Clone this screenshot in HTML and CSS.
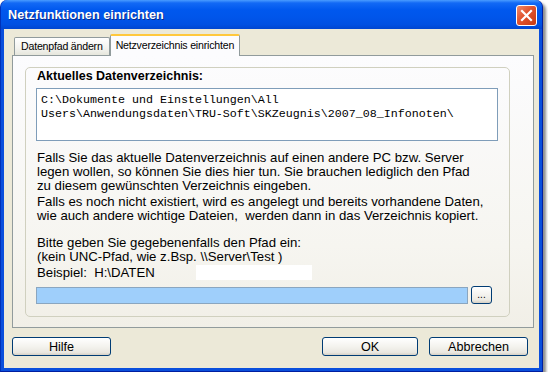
FILE: index.html
```html
<!DOCTYPE html>
<html lang="de">
<head>
  <meta charset="UTF-8" />
  <title>Netzfunktionen einrichten</title>
  <link rel="stylesheet" href="styles.css">
</head>
<body>
  <div class="window">
    <div class="titlebar">
      <span class="title">Netzfunktionen einrichten</span>
      <button class="close" aria-label="Schließen">
        <svg width="13" height="13" viewBox="0 0 13 13">
          <path d="M2 2 L11 11 M11 2 L2 11" stroke="#fff" stroke-width="2.2" stroke-linecap="square"/>
        </svg>
      </button>
    </div>

    <div class="client">
      <div class="tabs">
        <div class="tab">Datenpfad ändern</div>
        <div class="tab active">Netzverzeichnis einrichten</div>
      </div>

      <div class="panel">
        <div class="group">
          <div class="group-title">Aktuelles Datenverzeichnis:</div>
          <div class="pathbox">C:\Dokumente und Einstellungen\All <span class="nowrap">Users\Anwendungsdaten\TRU-Soft\SKZeugnis\2007_08_Infonoten\</span></div>

          <p class="info first">Falls Sie das aktuelle Datenverzeichnis auf einen andere PC bzw. Server<br>legen wollen, so können Sie dies hier tun. Sie brauchen lediglich den Pfad<br>zu diesem gewünschten Verzeichnis eingeben.</p>
          <p class="info">Falls es noch nicht existiert, wird es angelegt und bereits vorhandene Daten,<br>wie auch andere wichtige Dateien,&nbsp; werden dann in das Verzeichnis kopiert.</p>

          <p class="info ask">Bitte geben Sie gegebenenfalls den Pfad ein:<br>(kein UNC-Pfad, wie z.Bsp. \\Server\Test )</p>
          <div class="example">
            <span class="example-text">Beispiel:&nbsp; H:\DATEN</span>
            <span class="blank"></span>
          </div>

          <div class="pathrow">
            <input class="pathinput" type="text" value="">
            <button class="browse">...</button>
          </div>
        </div>
      </div>

      <div class="buttons">
        <button class="btn">Hilfe</button>
        <span class="spacer"></span>
        <button class="btn ok">OK</button>
        <button class="btn">Abbrechen</button>
      </div>
    </div>
  </div>
</body>
</html>
```

FILE: styles.css
```css
body {
  margin: 0;
  background: #ffffff;
  font-family: "Liberation Sans", Arial, sans-serif;
}

.window {
  width: 543px;
  height: 372px;
  display: flex;
  flex-direction: column;
  background: #0a4fdc;
  border-radius: 7px 7px 0 0;
  box-shadow: 3px 3px 3px rgba(0, 0, 0, 0.45);
  border-left: 1px solid #0031b8;
  border-right: 1px solid #001ea0;
  border-bottom: 1px solid #001ea0;
  box-sizing: border-box;
}

.titlebar {
  height: 29px;
  flex: none;
  display: flex;
  align-items: center;
  justify-content: space-between;
  padding: 0 5px 0 7px;
  border-radius: 7px 7px 0 0;
  background: linear-gradient(to bottom, #4a9cff 0, #1269f5 3px, #0058ee 10px, #0055ea 60%, #0050e2 85%, #0046d0 100%);
}

.title {
  color: #ffffff;
  font-weight: bold;
  font-size: 12.7px;
  text-shadow: 1px 1px 0 #0a2a8a;
}

.close {
  width: 21px;
  height: 21px;
  margin-top: 1px;
  padding: 0;
  border: 1px solid #ffffff;
  border-radius: 3px;
  background: linear-gradient(135deg, #f08a6a 0%, #e0532e 45%, #c83a12 100%);
  display: flex;
  align-items: center;
  justify-content: center;
}

.client {
  flex: 1;
  margin: 0 3px 3px;
  background: #ece9d8;
  padding: 6px 5px 0 8px;
  display: flex;
  flex-direction: column;
}

.tabs {
  display: flex;
  align-items: flex-end;
  padding-left: 2px;
  height: 20px;
  position: relative;
  z-index: 1;
}

.tab {
  height: 17px;
  padding: 0 6px;
  font-size: 10.6px;
  letter-spacing: -0.2px;
  line-height: 17px;
  color: #000;
  background: linear-gradient(to bottom, #ffffff, #f3f3ef 60%, #e6e6dc);
  border: 1px solid #919b9c;
  border-bottom: none;
  border-radius: 2px 2px 0 0;
}

.tab.active {
  line-height: 18px;
  padding: 0 5px;
  background: #fcfcfe;
  border-top: 2px solid #ffc83c;
  border-left: 1px solid #919b9c;
  border-right: 1px solid #919b9c;
  margin-bottom: -1px;
  box-sizing: border-box;
  height: 22px;
}

.panel {
  height: 273px;
  border: 1px solid #919b9c;
  background: linear-gradient(to bottom, #fcfcfe, #f6f5f0 70%, #f1efe7);
  padding: 11px 23px 10px 12px;
  box-sizing: border-box;
}

.group {
  height: 100%;
  box-sizing: border-box;
  border: 1px solid #d0d0bf;
  border-radius: 5px;
  padding: 0 11px 0 10px;
}

.group-title {
  font-weight: bold;
  font-size: 12.5px;
  line-height: 14px;
  padding: 1px 0 0 1px;
  height: 19px;
}

.pathbox {
  height: 53px;
  box-sizing: border-box;
  border: 1px solid #7f9db9;
  background: #ffffff;
  padding: 4px 4px 0 4px;
  font-family: "Liberation Mono", "Courier New", monospace;
  font-size: 11.67px;
  line-height: 14px;
}

.nowrap {
  white-space: nowrap;
}

.info {
  margin: 0;
  font-size: 13.2px;
  line-height: 14px;
  color: #000;
  padding-left: 1px;
}

.info.first {
  margin-top: 10px;
}

.info + .info {
  margin-top: 2px;
}

.info.ask {
  margin-top: 13px;
}

.example {
  display: flex;
  align-items: center;
  font-size: 13.2px;
  line-height: 15px;
  margin-top: 1px;
  padding-left: 1px;
}

.example-text {
  width: 159px;
}

.blank {
  width: 116px;
  height: 15px;
  background: #ffffff;
}

.pathrow {
  display: flex;
  align-items: center;
  gap: 3px;
  margin-top: 6px;
}

.pathinput {
  width: 432px;
  height: 17px;
  box-sizing: border-box;
  border: 1px solid #8aa6c0;
  background: #9fcffb;
  padding: 0;
}

.browse {
  width: 21px;
  height: 18px;
  padding: 0;
  font-size: 10px;
  line-height: 10px;
  border: 1px solid #003c74;
  border-radius: 3px;
  background: linear-gradient(to bottom, #ffffff, #eceae3 80%, #d6d0c5);
}

.buttons {
  display: flex;
  align-items: center;
  margin-top: 9px;
  padding-right: 6px;
}

.spacer {
  flex: 1;
}

.btn {
  width: 99px;
  height: 19px;
  padding: 0;
  font-family: "Liberation Sans", Arial, sans-serif;
  font-size: 12.6px;
  color: #000;
  border: 1px solid #003c74;
  border-radius: 3px;
  background: linear-gradient(to bottom, #ffffff, #f4f3ee 50%, #e9e7e0 85%, #d6d0c5);
}

.btn.ok {
  width: 96px;
  margin-right: 11px;
}
```
